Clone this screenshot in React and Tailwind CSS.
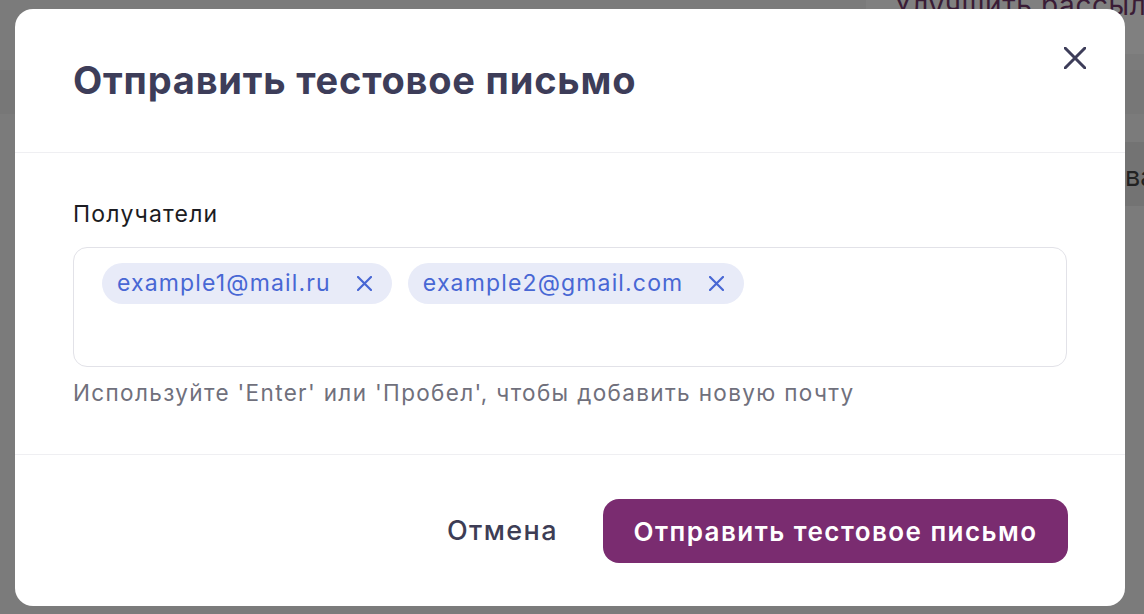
import React, { useState } from "react";

const Cross = ({ className, size, strokeWidth }) => (
  <svg viewBox={`0 0 ${size} ${size}`} fill="none" stroke="currentColor" strokeWidth={strokeWidth} strokeLinecap="round" className={className}>
    <path d={`M1 1L${size - 1} ${size - 1}M${size - 1} 1L1 ${size - 1}`} />
  </svg>
);

const Chip = ({ email, onRemove }) => (
  <span className="flex items-center h-[41px] rounded-full bg-[#e8ebf8] pl-[15px] pr-[20px] text-[23px] tracking-[1.15px] text-[#4867d4]">
    {email}
    <button onClick={onRemove} className="ml-[26px] text-[#4867d4]">
      <Cross className="w-[15px] h-[15px]" size={15} strokeWidth={2.2} />
    </button>
  </span>
);

export default function App() {
  const [emails, setEmails] = useState(["example1@mail.ru", "example2@gmail.com"]);

  return (
    <div className="relative w-[1144px] h-[614px] overflow-hidden bg-[#7b7b7b] pt-[9px] px-[15px]" style={{ fontFamily: "Inter, 'Noto Sans', sans-serif" }}>
      {/* page underneath the overlay */}
      <div className="absolute top-[-16px] left-[866px] w-[278px] h-[70px] bg-[#808080] pl-[28px] whitespace-nowrap text-[28px] tracking-[0.6px] text-[#3a1c36]">Улучшить рассылку</div>
      <div className="absolute top-[70px] left-0 w-[1144px] h-[44px] bg-[#777777]"></div>
      <div className="absolute top-[142px] left-[1125px] w-[19px] h-[64px] bg-[#737373] pt-[15px] whitespace-nowrap text-[27px] text-[#222222]">ва</div>

      <div className="relative bg-white rounded-[18px] w-[1110px] h-[597px] flex flex-col">
        <div className="flex items-start justify-between h-[144px] border-b border-[#efeff2] pl-[58px] pr-[39px]">
          <h1 className="mt-[48px] text-[38px] leading-[46px] font-bold text-[#3d3d59] tracking-[0.8px]">Отправить тестовое письмо</h1>
          <button className="mt-[38px] text-[#3d3d59]">
            <Cross className="w-[22px] h-[22px]" size={22} strokeWidth={3} />
          </button>
        </div>

        <div className="px-[58px] pt-[46px] pb-[46px] border-b border-[#efeff2]">
          <div className="text-[23px] leading-[30px] tracking-[1.2px] text-[#1c1c22] mb-[18px]">Получатели</div>
          <div className="h-[120px] border border-[#e2e2e8] rounded-[14px] pl-[28px] pt-[15px] flex flex-wrap items-start gap-[16px]">
            {emails.map(e => (
              <Chip key={e} email={e} onRemove={() => setEmails(emails.filter(x => x !== e))} />
            ))}
          </div>
          <div className="mt-[11px] text-[22.5px] leading-[30px] tracking-[1.35px] text-[#70707c]">
            Используйте 'Enter' или 'Пробел', чтобы добавить новую почту
          </div>
        </div>

        <div className="flex items-center justify-end gap-[45px] pr-[57px] pt-[44px]">
          <button className="text-[27px] font-medium tracking-[1.4px] text-[#3d3d55]">Отмена</button>
          <button className="h-[64px] w-[465px] rounded-[16px] bg-[#7a2c70] text-white text-[26px] font-semibold tracking-[1.45px]">
            Отправить тестовое письмо
          </button>
        </div>
      </div>
    </div>
  );
}
